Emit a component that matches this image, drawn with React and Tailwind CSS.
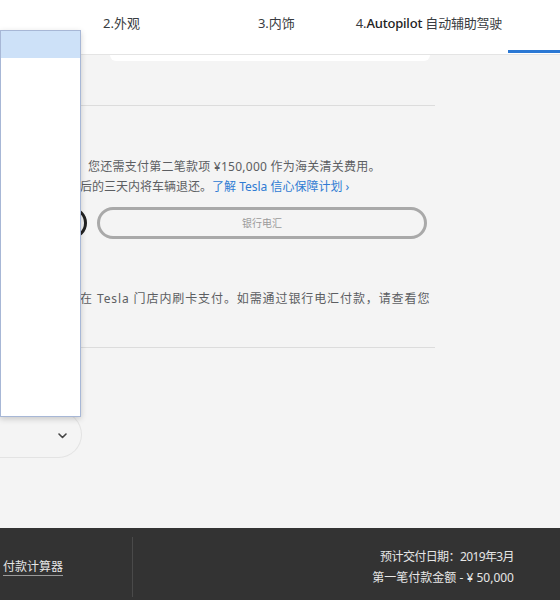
import React from 'react';

// Tesla order page – payment step, with an open dropdown on the left
const FONT = "font-['Noto_Sans','Noto_Sans_CJK_SC',sans-serif]";

const Tabs = () => (
  <header className="relative h-[55px] bg-white border-b border-[#e4e4e4] flex items-start text-[13px] text-[#393c41]">
    <span className="ml-[103px] mt-[14px]">2.外观</span>
    <span className="ml-[118px] mt-[14px]">3.内饰</span>
    <span className="ml-[61px] mt-[14px] tracking-[-0.2px]">
      4.<span className="font-medium text-[#222]">Autopilot</span> 自动辅助驾驶
    </span>
    <span className="ml-auto mt-[50px] w-[52px] h-[3px] bg-[#2b78d4]" />
  </header>
);

const Dropdown = () => (
  <div className="absolute left-0 top-[30px] w-[81px] h-[387px] bg-white border border-[#a7b7d6] shadow-[0_2px_6px_rgba(0,0,0,0.18)] z-10">
    <div className="h-[27px] bg-[#cde1f8]" />
  </div>
);

const Footer = () => (
  <footer className="h-[72px] bg-[#333333] flex text-[12px] text-[#e6e6e6]">
    <div className="w-[133px] flex items-center pl-[3px] pt-[9px] pb-[3px]">
      <span className="border-b border-[#9a9a9a] leading-[17px]">付款计算器</span>
      <span className="ml-auto self-stretch w-px bg-[#4a4a4a]" />
    </div>
    <div className="flex-1 flex flex-col items-end justify-center pr-[46px] leading-[21px] pt-[6px]">
      <span className="tracking-[-0.6px]">预计交付日期：2019年3月</span>
      <span>第一笔付款金额 - ¥ 50,000</span>
    </div>
  </footer>
);

export default function App() {
  return (
    <div className={`relative w-[560px] h-[600px] overflow-hidden bg-[#f4f4f4] flex flex-col ${FONT}`}>
      <Tabs />
      <Dropdown />

      <main className="flex-1 flex flex-col w-[435px]">
        <div className="ml-[110px] w-[320px] h-[6px] bg-white rounded-b-[12px]" />

        <div className="ml-[80px] mt-[44px] h-px bg-[#dcdcdc]" />

        <div className="mt-[51px] text-[12px] leading-[20px] text-[#5c5e62] whitespace-nowrap">
          <p className="pl-[88px] tracking-[0.25px]">您还需支付第二笔款项 ¥150,000 作为海关清关费用。</p>
          <p className="pl-[80px]">
            后的三天内将车辆退还。<span className="text-[#2f7bd3]">了解 Tesla 信心保障计划 ›</span>
          </p>
        </div>

        <div className="mt-[10px] flex items-center gap-[10px]">
          <div className="w-[87px] h-[32px] rounded-full border-[3px] border-[#222]" />
          <div className="w-[330px] h-[32px] rounded-full border-[3px] border-[#a9a9a9] flex items-center justify-center text-[10px] text-[#9b9b9b]">
            银行电汇
          </div>
        </div>

        <p className="mt-[50px] pl-[80px] text-[12px] leading-[20px] text-[#5c5e62] whitespace-nowrap tracking-[0.9px]">
          在 Tesla 门店内刷卡支付。如需通过银行电汇付款，请查看您
        </p>

        <div className="ml-[80px] mt-[38px] h-px bg-[#dcdcdc]" />

        <div className="mt-[63px] w-[82px] h-[47px] rounded-r-full border border-l-0 border-[#e3e3e3] flex items-center justify-end pr-[14px] pt-[3px]">
          <svg width="9" height="6" viewBox="0 0 9 6" fill="none">
            <path d="M1 1l3.5 3.5L8 1" stroke="#444" strokeWidth="1.6" strokeLinecap="round" strokeLinejoin="round" />
          </svg>
        </div>
      </main>

      <Footer />
    </div>
  );
}
